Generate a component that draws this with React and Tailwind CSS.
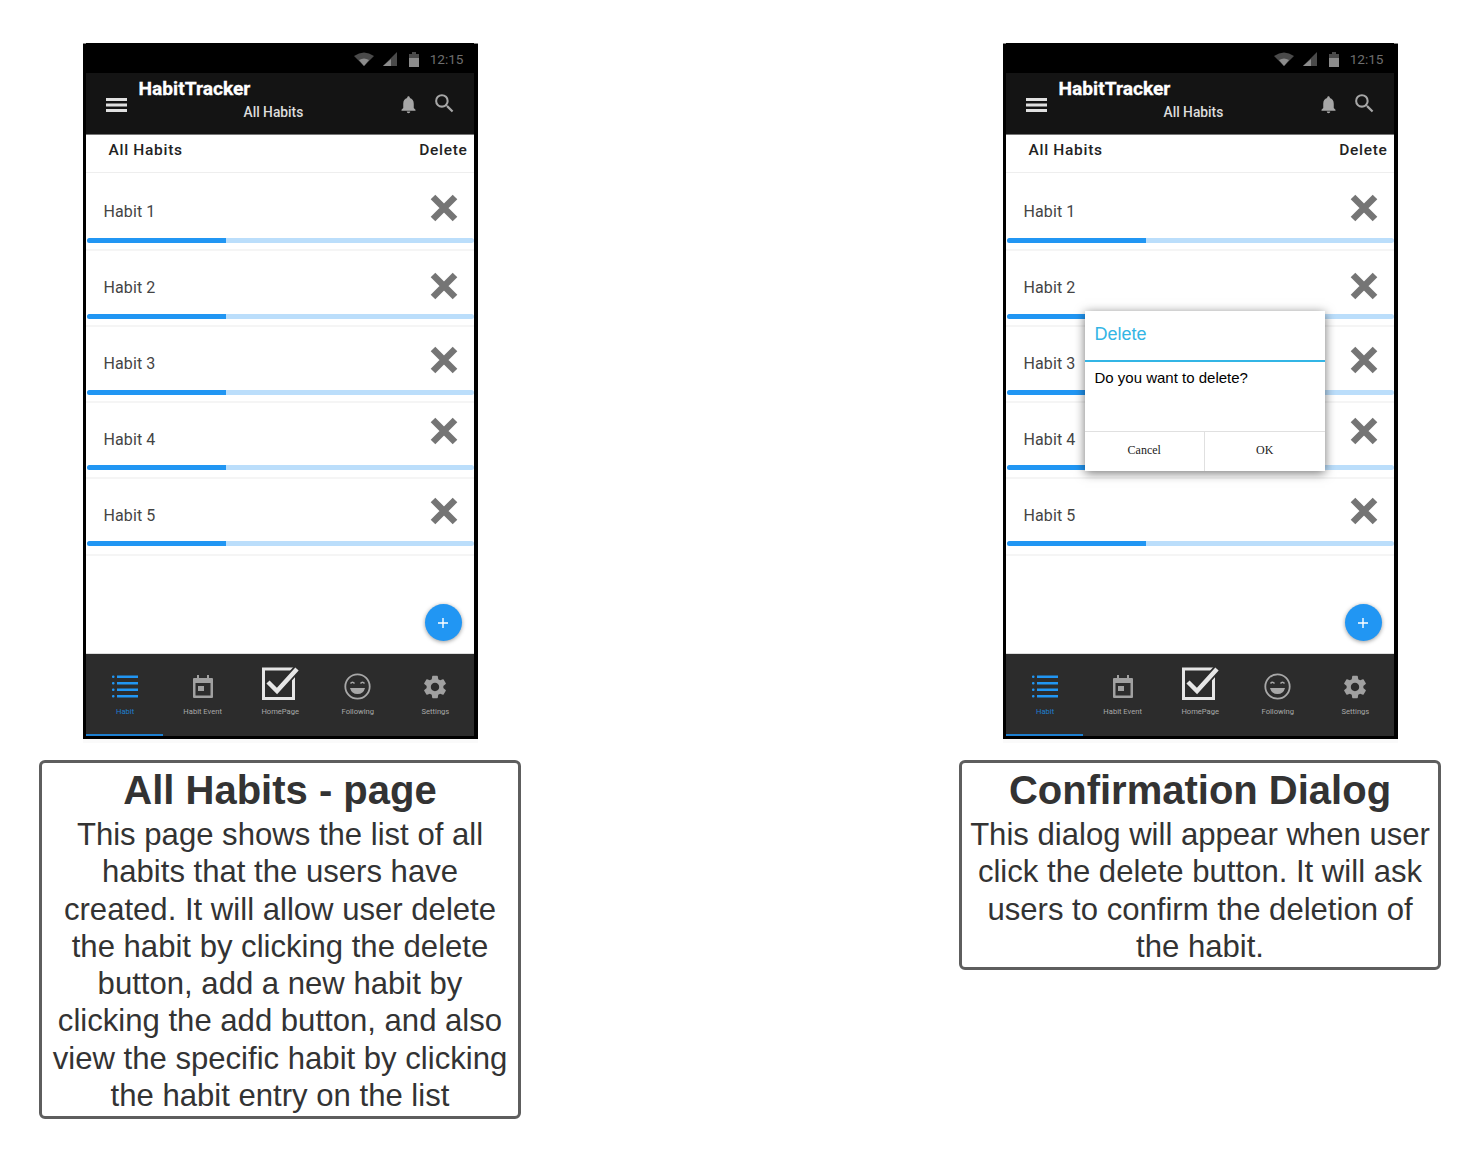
import { MdNotifications, MdSearch, MdSettings } from 'react-icons/md'

const habits = [
  { name: 'Habit 1', top: 'h-[65px]', text: 'mt-[13px]', shift: 'mt-[5px]' },
  { name: 'Habit 2', top: 'h-[63px]', text: 'mt-[11px]', shift: 'mt-[7px]' },
  { name: 'Habit 3', top: 'h-[63px]', text: 'mt-[11px]', shift: 'mt-[3px]' },
  { name: 'Habit 4', top: 'h-[62px]', text: 'mt-[12px]', shift: 'mb-[6px]' },
  { name: 'Habit 5', top: 'h-[62px]', text: 'mt-[12px]', shift: 'mt-[2px]' },
]

// status bar glyphs
const StatusIcons = () => (
  <div className="flex items-center justify-end h-[30px] pr-[10px] pt-[2px] bg-black">
    <svg width="20" height="14" viewBox="0 0 20 14" className="mr-[9px]">
      <path d="M0 4 Q10 -3 20 4 L10 14 Z" fill="#4a4a4a" />
      <path d="M5 8 Q10 5 15 8 L10 14 Z" fill="#8c8c8c" />
    </svg>
    <svg width="14" height="14" viewBox="0 0 14 14" className="mr-[12px]">
      <path d="M14 0 V14 H0 Z" fill="#4a4a4a" />
      <path d="M8 7 V14 H0 Z" fill="#8c8c8c" />
    </svg>
    <svg width="10" height="15" viewBox="0 0 10 15" className="mr-[11px]">
      <path d="M3 0 H7 V2 H10 V6 H0 V2 H3 Z" fill="#4a4a4a" />
      <rect y="6" width="10" height="9" fill="#8c8c8c" />
    </svg>
    <span className="font-['Roboto',sans-serif] text-[13.6px] text-[#6e6e6e]">12:15</span>
  </div>
)

const Toolbar = () => (
  <div className="relative flex items-center h-[62px] pl-[20px] pr-[17px] bg-[#141414] border-b border-[#777] font-['Roboto',sans-serif]">
    <svg width="21" height="14" viewBox="0 0 21 14" className="mt-[2px]">
      <path d="M0 0 H21 V3 H0 Z M0 5.5 H21 V8.5 H0 Z M0 11 H21 V14 H0 Z" fill="#e0e0e0" />
    </svg>
    <div className="ml-[12px] flex-1 self-start pt-[4px]">
      <div className="text-[19.2px] leading-[23px] font-bold text-white [-webkit-text-stroke:0.3px_#fff]">HabitTracker</div>
      <div className="ml-[105px] mt-[4px] text-[13.8px] leading-[16px] font-medium text-[#dddddd]">All Habits</div>
    </div>
    <MdNotifications className="text-[#a6a6a6] mt-[2px] mr-[13px]" size={21} />
    <MdSearch className="text-[#a6a6a6]" size={25} />
  </div>
)

const HabitRow = ({ name, top, text, shift }) => (
  <div className="flex flex-col h-[76px] last:h-[79px] border-t-2 first:border-t-0 last:border-b-2 border-[#f5f5f5]">
    <div className={`flex items-center justify-between pl-[18px] pr-[16px] ${top}`}>
      <span className={`font-['Roboto',sans-serif] text-[16px] tracking-[0.1px] text-[#444] ${text}`}>{name}</span>
      <svg width="28" height="28" viewBox="0 0 28 28" className={shift}>
        <path d="M3 3 L25 25 M25 3 L3 25" stroke="#757575" strokeWidth="6.5" />
      </svg>
    </div>
    <div className="flex h-[5px] ml-px rounded-full overflow-hidden bg-[#bbdefb]">
      <div className="w-[139px] bg-[#2196f3]" />
    </div>
  </div>
)

const NavItem = ({ label, active, children }) => (
  <div className={`flex-1 flex flex-col items-center pl-[1.5px] border-b-2 ${active ? 'border-[#1e7fd0]' : 'border-transparent'}`}>
    <div className="h-[43px] mt-[4px] flex items-end justify-center">{children}</div>
    <span className={`mt-[6px] text-[7.6px] leading-[10px] font-['Roboto',sans-serif] ${active ? 'text-[#1e7fd0]' : 'text-[#a8a8a8]'}`}>{label}</span>
  </div>
)

const BottomNav = () => (
  <div className="flex h-[83px] bg-[#2c2c2c] border-t border-[#ddd]">
    <NavItem label="Habit" active>
      <svg width="26" height="24" viewBox="0 0 26 24" className="mb-[2px]">
        {[1.5, 8, 14.5, 21].map(y => (
          <g key={y} fill="#2196f3">
            <rect x="0" y={y - 1} width="2.5" height="2.5" rx="1" />
            <rect x="5" y={y - 1} width="21" height="2.5" />
          </g>
        ))}
      </svg>
    </NavItem>
    <NavItem label="Habit Event">
      <svg width="22" height="24" viewBox="0 0 22 24" className="mb-[2px]">
        <path d="M2 3 H5 V0 H7 V3 H15 V0 H17 V3 H20 Q21 3 21 4 V22 Q21 23 20 23 H2 Q1 23 1 22 V4 Q1 3 2 3 Z M3.5 8 V20.5 H18.5 V8 Z" fill="#a0a0a0" fillRule="evenodd" />
        <rect x="6" y="11" width="6" height="5" fill="#a0a0a0" />
      </svg>
    </NavItem>
    <NavItem label="HomePage">
      <svg width="37" height="33" viewBox="0 0 37 33" className="mb-px">
        <rect x="1.5" y="2" width="30" height="29.5" fill="none" stroke="#e6e6e6" strokeWidth="3" />
        <path d="M6 15 L15 24 L35 2" fill="none" stroke="#2c2c2c" strokeWidth="8" />
        <path d="M6 15 L15 24 L35 2" fill="none" stroke="#e6e6e6" strokeWidth="4.5" />
      </svg>
    </NavItem>
    <NavItem label="Following">
      <svg width="27" height="27" viewBox="0 0 27 27" className="mb-px">
        <circle cx="13.5" cy="13.5" r="12.2" fill="none" stroke="#a8a8a8" strokeWidth="1.8" />
        <path d="M6.5 10.5 Q8.5 8 10.5 10.5 M16.5 10.5 Q18.5 8 20.5 10.5" fill="none" stroke="#a8a8a8" strokeWidth="1.5" />
        <path d="M6 15 H21 Q19.5 21 13.5 21 Q7.5 21 6 15 Z" fill="#a8a8a8" />
      </svg>
    </NavItem>
    <NavItem label="Settings">
      <MdSettings className="text-[#a0a0a0]" size={28} />
    </NavItem>
  </div>
)

const DeleteDialog = () => (
  <div className="absolute left-[79px] top-[268px] w-[240px] h-[160px] flex flex-col bg-white shadow-[0_2px_10px_rgba(0,0,0,0.55)] font-['Liberation_Sans',sans-serif]">
    <div className="h-[51px] flex items-center px-[10px] pb-[2px] border-b-2 border-[#33b5e5] text-[18px] text-[#33b5e5]">Delete</div>
    <div className="h-[70px] px-[10px] pt-[6px] border-b border-[#e0e0e0] text-[15px] leading-[20px] text-black">Do you want to delete?</div>
    <div className="flex-1 flex pb-[3px] font-['Liberation_Serif',serif] text-[12px] text-[#222]">
      <div className="flex-1 flex items-center justify-center border-r border-[#e0e0e0] -mb-[3px] pb-[3px]">Cancel</div>
      <div className="flex-1 flex items-center justify-center">OK</div>
    </div>
  </div>
)

const Phone = ({ dialog }) => (
  <div className="relative w-[395px] h-[696px] flex flex-col border-[3px] border-r-4 border-black border-t-0 bg-white shadow-[0_4px_0_#fafafa]">
    <div className="h-px -ml-[3px] -mr-[4px] bg-[#888]" />
    <div className="-mt-px"><StatusIcons /></div>
    <Toolbar />
    <div className="relative flex-1 flex flex-col">
      <div className="flex items-center justify-between h-[38px] pl-[23px] pr-[6px] pb-[12px] pt-[6px] border-b border-[#eee] font-['Roboto',sans-serif] text-[15.5px] font-medium tracking-[0.7px] text-[#222]">
        <span>All Habits</span>
        <span>Delete</span>
      </div>
      <div>
        {habits.map(h => <HabitRow key={h.name} {...h} />)}
      </div>
      <div className="absolute right-[12px] bottom-[12px] w-[37px] h-[37px] rounded-full bg-[#2196f3] shadow-[0_1px_4px_rgba(0,0,0,0.4)] flex items-center justify-center">
        <svg width="10" height="10" viewBox="0 0 10 10">
          <path d="M5 0 V10 M0 5 H10" stroke="#fff" strokeWidth="1.4" />
        </svg>
      </div>
    </div>
    <BottomNav />
    {dialog && <DeleteDialog />}
  </div>
)

const Caption = ({ title, lines }) => (
  <div className="w-[482px] mt-[21px] pt-[2px] pb-[2px] border-[3px] border-[#5e5e5e] rounded-[6px] text-center text-[#333] font-['Liberation_Sans',sans-serif]">
    <div className="text-[40px] leading-[50px] mb-px font-bold">{title}</div>
    {lines.map(l => <div key={l} className="text-[31.1px] leading-[37.3px] whitespace-nowrap">{l}</div>)}
  </div>
)

export default function App(){
  return (
    <div className="w-[1480px] h-[1158px] bg-white flex justify-between items-start px-[39px] pt-[43px]">
      <div className="flex flex-col items-center">
        <Phone />
        <Caption
          title="All Habits - page"
          lines={[
            'This page shows the list of all',
            'habits that the users have',
            'created. It will allow user delete',
            'the habit by clicking the delete',
            'button, add a new habit by',
            'clicking the add button, and also',
            'view the specific habit by clicking',
            'the habit entry on the list',
          ]}
        />
      </div>
      <div className="flex flex-col items-center">
        <Phone dialog />
        <Caption
          title="Confirmation Dialog"
          lines={[
            'This dialog will appear when user',
            'click the delete button. It will ask',
            'users to confirm the deletion of',
            'the habit.',
          ]}
        />
      </div>
    </div>
  )
}
